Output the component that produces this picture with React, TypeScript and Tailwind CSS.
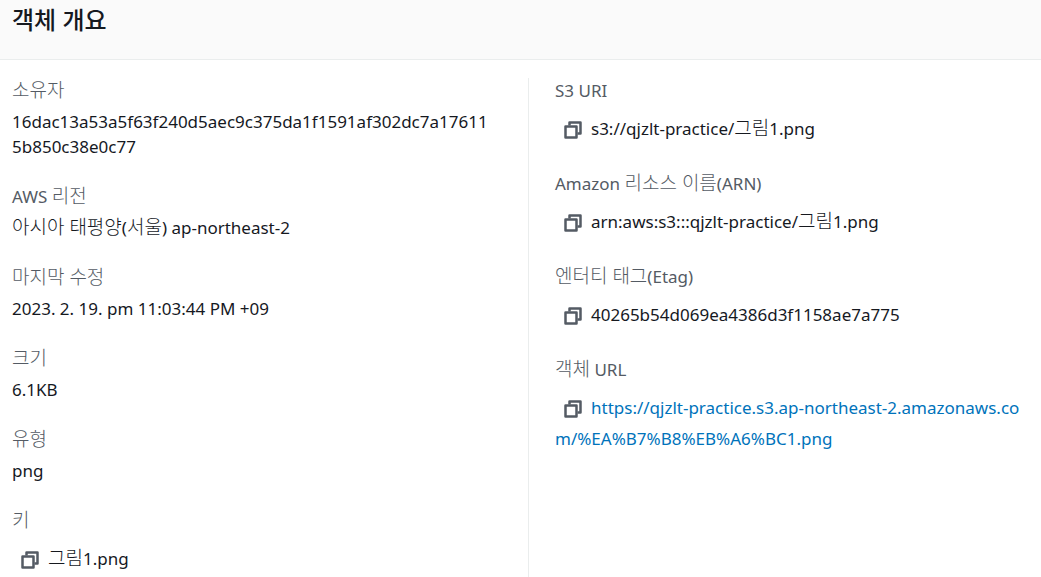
import type { ReactNode } from "react";

const HANGUL_RUN = /([\uac00-\ud7a3]+(?: [\uac00-\ud7a3]+)*)/;

function MixedText({ text }: { text: string }) {
  return (
    <>
      {text.split(HANGUL_RUN).map((part, i) =>
        i % 2 === 1 ? (
          <span key={i} lang="ko" className="text-[19px] leading-none font-light">
            {part}
          </span>
        ) : (
          part
        ),
      )}
    </>
  );
}

function CopyButton({ label }: { label: string }) {
  return (
    <button
      type="button"
      aria-label={label}
      className="mr-[9px] ml-[9px] inline-flex size-[18px] cursor-pointer align-[-4px] text-[#545b64]"
    >
      <svg viewBox="0 0 18 18" className="size-[18px]" fill="none" stroke="currentColor" strokeWidth="2.5">
        <path d="M1.5 5.5h11v11h-11z" strokeLinejoin="round" />
        <path d="M5.5 4.5v-3h11v11h-3" strokeLinejoin="round" />
      </svg>
    </button>
  );
}

function Field({ label, children }: { label: string; children: string }) {
  return (
    <div>
      <dt className="leading-[26px] text-[#545b64]">
        <MixedText text={label} />
      </dt>
      <dd className="mt-[5px] break-all leading-[25px]">
        <MixedText text={children} />
      </dd>
    </div>
  );
}

function CopyField({ label, children }: { label: string; children: ReactNode }) {
  return (
    <div>
      <dt className="leading-[26px] text-[#545b64]">
        <MixedText text={label} />
      </dt>
      <dd className="mt-[9px] break-all leading-[31px]">
        <CopyButton label={`${label} 복사`} />
        {typeof children === "string" ? <MixedText text={children} /> : children}
      </dd>
    </div>
  );
}

export default function App() {
  return (
    <section className="flex min-h-screen flex-col bg-white font-['Noto_Sans','Noto_Sans_CJK_KR',sans-serif] text-[17px] text-[#16191f]">
      <header className="border-b border-[#eaeded] bg-[#fafafa] px-3 pt-1 pb-[23px]">
        <h2 className="text-2xl leading-8 font-medium">객체 개요</h2>
      </header>
      <div className="grid flex-1 grid-cols-[528fr_513fr] pt-[18px]">
        <dl className="flex flex-col gap-[25px] pr-9 pl-3">
          <Field label="소유자">16dac13a53a5f63f240d5aec9c375da1f1591af302dc7a176115b850c38e0c77</Field>
          <Field label="AWS 리전">아시아 태평양(서울) ap-northeast-2</Field>
          <Field label="마지막 수정">2023. 2. 19. pm 11:03:44 PM +09</Field>
          <Field label="크기">6.1KB</Field>
          <Field label="유형">png</Field>
          <CopyField label="키">그림1.png</CopyField>
        </dl>
        <dl className="flex flex-col gap-[27px] border-l border-[#eaeded] pr-3 pl-[26px]">
          <CopyField label="S3 URI">s3://qjzlt-practice/그림1.png</CopyField>
          <CopyField label="Amazon 리소스 이름(ARN)">arn:aws:s3:::qjzlt-practice/그림1.png</CopyField>
          <CopyField label="엔터티 태그(Etag)">40265b54d069ea4386d3f1158ae7a775</CopyField>
          <CopyField label="객체 URL">
            <a
              href="https://qjzlt-practice.s3.ap-northeast-2.amazonaws.com/%EA%B7%B8%EB%A6%BC1.png"
              className="text-[#0073bb] hover:underline"
            >
              https://qjzlt-practice.s3.ap-northeast-2.amazonaws.com/%EA%B7%B8%EB%A6%BC1.png
            </a>
          </CopyField>
        </dl>
      </div>
    </section>
  );
}
